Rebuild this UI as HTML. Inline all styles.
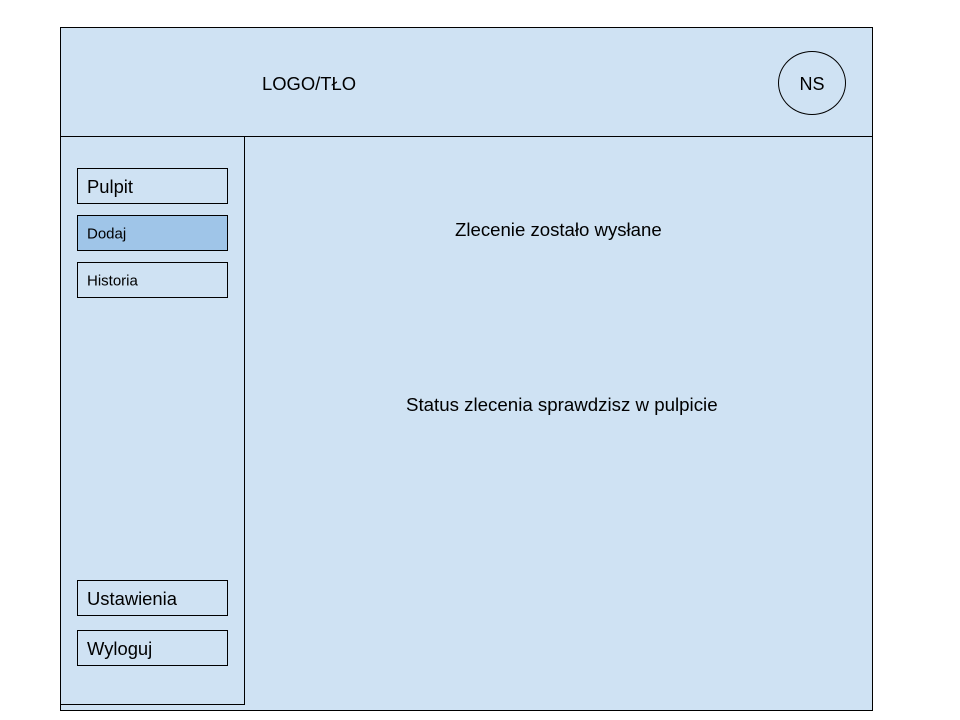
<!DOCTYPE html>
<html><head><meta charset="utf-8"><style>
body{margin:0;width:960px;height:720px;background:#fff;position:relative;overflow:hidden;font-family:"Liberation Sans",Arial,sans-serif;color:#000}
div{position:absolute;box-sizing:border-box}
.t{white-space:nowrap;line-height:1}
.b{border:1px solid #000;background:#cfe2f3;left:77px;width:151px;height:36px}
.b span{position:absolute;left:9px;top:50%;transform:translateY(-45%);white-space:nowrap}
</style></head><body>
<div style="left:60px;top:27px;width:813px;height:684px;border:1px solid #000;background:#cfe2f3"></div>
<div style="left:60px;top:136px;width:813px;height:1px;background:#000"></div>
<div style="left:60px;top:136px;width:185px;height:569px;border:1px solid #000;border-top:none;border-left:none"></div>
<div style="left:60px;top:704px;width:185px;height:1px;background:#000"></div>
<div class="t" style="left:262px;top:75px;font-size:18.4px">LOGO/TŁO</div>
<div style="left:778px;top:51px;width:68px;height:64px;border:1px solid #000;border-radius:50%"></div>
<div class="t" style="left:778px;top:75px;width:68px;text-align:center;font-size:18px">NS</div>
<div class="b" style="top:168px;font-size:18.4px"><span>Pulpit</span></div>
<div class="b" style="top:215px;background:#9fc5e8;font-size:15px"><span>Dodaj</span></div>
<div class="b" style="top:262px;font-size:15px"><span>Historia</span></div>
<div class="b" style="top:580px;font-size:18.4px"><span>Ustawienia</span></div>
<div class="b" style="top:630px;font-size:18.4px"><span>Wyloguj</span></div>
<div class="t" style="left:455px;top:221px;font-size:18.6px">Zlecenie zostało wysłane</div>
<div class="t" style="left:406px;top:396px;font-size:18.7px">Status zlecenia sprawdzisz w pulpicie</div>
</body></html>
